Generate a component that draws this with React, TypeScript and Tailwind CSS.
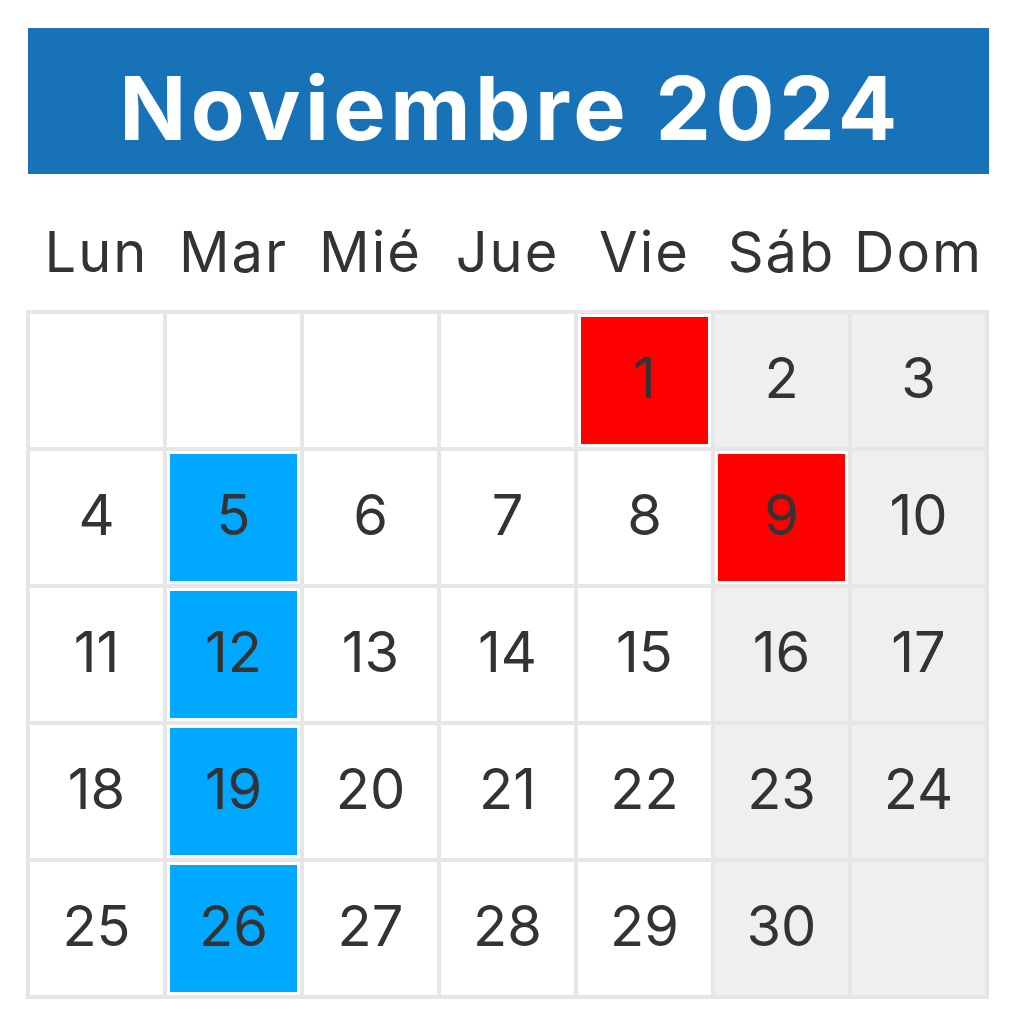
const dayNames = ['Lun', 'Mar', 'Mié', 'Jue', 'Vie', 'Sáb', 'Dom'];

type Cell = { day: number | null; mark?: 'red' | 'blue' };

const weeks: Cell[][] = [
  [{ day: null }, { day: null }, { day: null }, { day: null }, { day: 1, mark: 'red' }, { day: 2 }, { day: 3 }],
  [{ day: 4 }, { day: 5, mark: 'blue' }, { day: 6 }, { day: 7 }, { day: 8 }, { day: 9, mark: 'red' }, { day: 10 }],
  [{ day: 11 }, { day: 12, mark: 'blue' }, { day: 13 }, { day: 14 }, { day: 15 }, { day: 16 }, { day: 17 }],
  [{ day: 18 }, { day: 19, mark: 'blue' }, { day: 20 }, { day: 21 }, { day: 22 }, { day: 23 }, { day: 24 }],
  [{ day: 25 }, { day: 26, mark: 'blue' }, { day: 27 }, { day: 28 }, { day: 29 }, { day: 30 }, { day: null }],
];

function DayCell({ cell, weekend }: { cell: Cell; weekend: boolean }) {
  const base = weekend ? 'bg-[#efefef]' : 'bg-white';
  if (cell.mark) {
    return (
      <div className="bg-white p-[3px]">
        <div
          className={`h-full flex items-center justify-center pb-[6px] ${
            cell.mark === 'red' ? 'bg-[#ff0000]' : 'bg-[#00a8ff]'
          }`}
        >
          {cell.day}
        </div>
      </div>
    );
  }
  return <div className={`${base} flex items-center justify-center pb-[6px]`}>{cell.day ?? ''}</div>;
}

export default function App() {
  return (
    <div
      className="w-[1017px] h-[1024px] bg-white pt-[28px] text-[#333333]"
      style={{ fontFamily: 'Inter, "Noto Sans", sans-serif' }}
    >
      <div className="ml-[28px] w-[961px] h-[146px] bg-[#1872b7] flex items-center justify-center pt-[14px]">
        <h1 className="text-white font-bold text-[88px] leading-none tracking-[4.5px] pl-[4px]">Noviembre 2024</h1>
      </div>

      <div className="ml-[26px] w-[963px] grid grid-cols-7 gap-[4px] px-[4px] h-[136px] items-center pt-[20px]">
        {dayNames.map((d) => (
          <div key={d} className="text-center text-[56px] leading-none whitespace-nowrap tracking-[2px]">
            {d}
          </div>
        ))}
      </div>

      <div className="ml-[26px] w-[963px] grid grid-cols-7 grid-rows-[repeat(5,133px)] gap-[4px] p-[4px] bg-[#e6e6e6] text-[56px] leading-none">
        {weeks.map((w, wi) =>
          w.map((c, ci) => <DayCell key={`${wi}-${ci}`} cell={c} weekend={ci >= 5} />)
        )}
      </div>
    </div>
  );
}
